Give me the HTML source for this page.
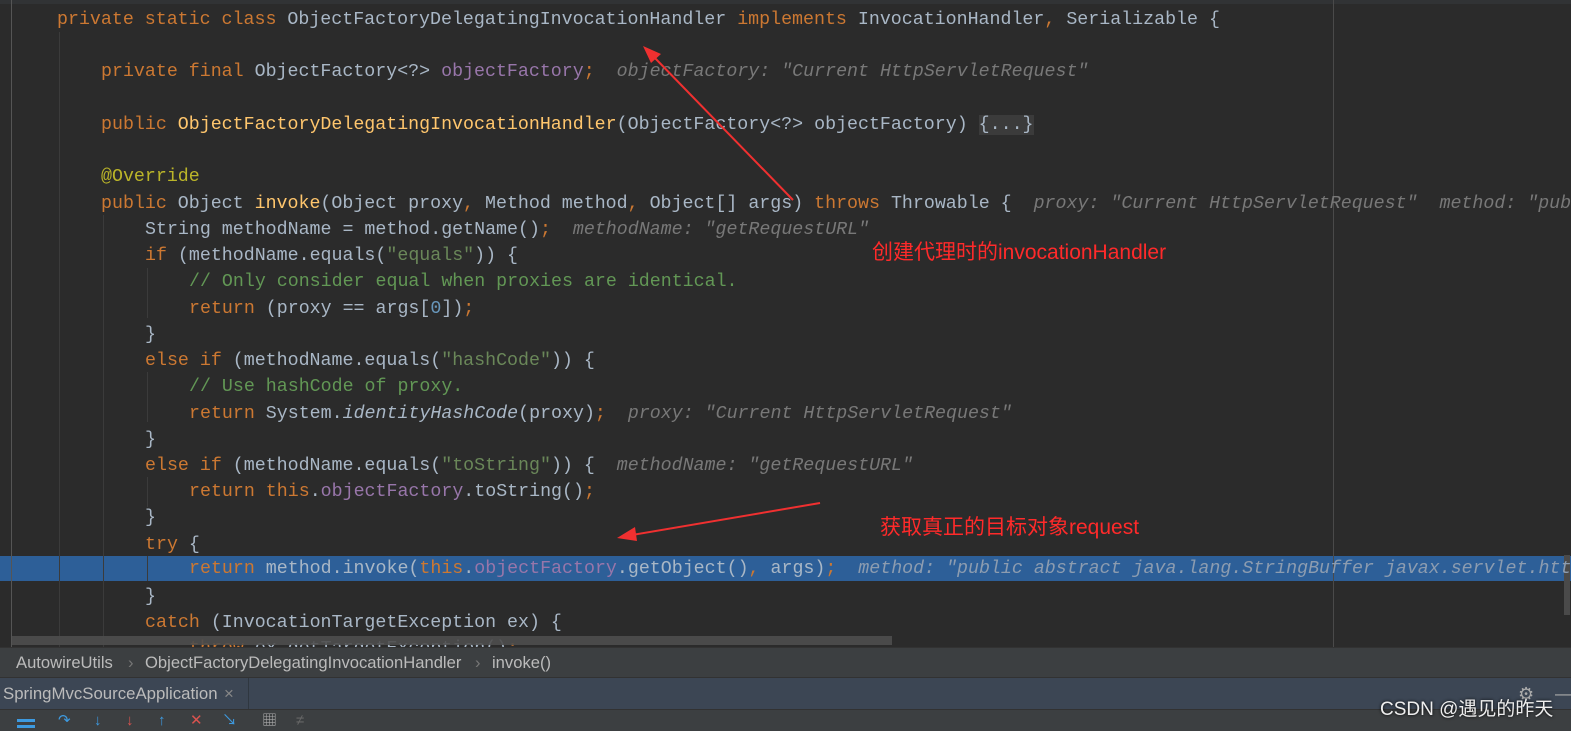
<!DOCTYPE html>
<html><head><meta charset="utf-8"><style>
body{margin:0;width:1571px;height:730px;overflow:hidden;background:#2b2b2b;position:relative;font-family:"Liberation Mono",monospace}
.code{position:absolute;left:0;top:0;width:1571px;height:647px;overflow:hidden}
.ln{position:absolute;left:57px;height:26px;line-height:26px;font-size:18.3px;white-space:pre;color:#a9b7c6;margin-top:2px}
.k{color:#cc7832}.s{color:#6a8759}.c{color:#629755}.f{color:#9876aa}.a{color:#bbb529}.m{color:#ffc66d}
.h{color:#787878;font-style:italic}.i{font-style:italic}
.sel{position:absolute;left:0;top:556px;width:1571px;height:25px;background:#2d5f98}
.guide{position:absolute;width:1px;background:#3b3b3b}
.bar{position:absolute;left:0;width:1571px}
.ui{font-family:"Liberation Sans","Noto Sans CJK SC",sans-serif}
.note{position:absolute;color:#ff2a2a;font-family:"Liberation Sans","Noto Sans CJK SC",sans-serif;font-size:21px}
</style></head><body>
<div class="code">
<div class="sel"></div>
<div style="position:absolute;left:0;top:0;width:1571px;height:4px;background:#313335"></div>
<div style="position:absolute;left:11px;top:0;width:1px;height:647px;background:#555"></div>
<div class="guide" style="left:59px;top:32px;height:615px"></div>
<div class="guide" style="left:103px;top:215px;height:432px"></div>
<div class="guide" style="left:147px;top:268px;height:50px"></div>
<div class="guide" style="left:147px;top:372px;height:50px"></div>
<div class="guide" style="left:147px;top:477px;height:30px"></div>
<div class="guide" style="left:147px;top:556px;height:25px"></div>
<div style="position:absolute;left:1333px;top:0;width:1px;height:647px;background:#4a4a4a"></div>
<div style="position:absolute;left:1564px;top:555px;width:6px;height:60px;background:#4a4a4a"></div>
<div class="ln" style="top:5px"><span class="k">private static class </span>ObjectFactoryDelegatingInvocationHandler <span class="k">implements </span>InvocationHandler<span class="k">, </span>Serializable {</div>
<div class="ln" style="top:57px;left:101px"><span class="k">private final </span>ObjectFactory&lt;?&gt; <span class="f">objectFactory</span><span class="k">;</span>  <span class="h">objectFactory: "Current HttpServletRequest"</span></div>
<div class="ln" style="top:110px;left:101px"><span class="k">public </span><span class="m">ObjectFactoryDelegatingInvocationHandler</span>(ObjectFactory&lt;?&gt; objectFactory) <span style="background:#3b3b3b;color:#a9b7c6">{...}</span></div>
<div class="ln" style="top:162px;left:101px"><span class="a">@Override</span></div>
<div class="ln" style="top:189px;left:101px"><span class="k">public </span>Object <span class="m">invoke</span>(Object proxy<span class="k">, </span>Method method<span class="k">, </span>Object[] args) <span class="k">throws </span>Throwable {  <span class="h">proxy: "Current HttpServletRequest"  method: "public</span></div>
<div class="ln" style="top:215px;left:145px">String methodName = method.getName()<span class="k">;</span>  <span class="h">methodName: "getRequestURL"</span></div>
<div class="ln" style="top:241px;left:145px"><span class="k">if </span>(methodName.equals(<span class="s">"equals"</span>)) {</div>
<div class="ln" style="top:267px;left:189px"><span class="c">// Only consider equal when proxies are identical.</span></div>
<div class="ln" style="top:294px;left:189px"><span class="k">return </span>(proxy == args[<span style="color:#6897bb">0</span>])<span class="k">;</span></div>
<div class="ln" style="top:320px;left:145px">}</div>
<div class="ln" style="top:346px;left:145px"><span class="k">else if </span>(methodName.equals(<span class="s">"hashCode"</span>)) {</div>
<div class="ln" style="top:372px;left:189px"><span class="c">// Use hashCode of proxy.</span></div>
<div class="ln" style="top:399px;left:189px"><span class="k">return </span>System.<span class="i">identityHashCode</span>(proxy)<span class="k">;</span>  <span class="h">proxy: "Current HttpServletRequest"</span></div>
<div class="ln" style="top:425px;left:145px">}</div>
<div class="ln" style="top:451px;left:145px"><span class="k">else if </span>(methodName.equals(<span class="s">"toString"</span>)) {  <span class="h">methodName: "getRequestURL"</span></div>
<div class="ln" style="top:477px;left:189px"><span class="k">return this</span>.<span class="f">objectFactory</span>.toString()<span class="k">;</span></div>
<div class="ln" style="top:503px;left:145px">}</div>
<div class="ln" style="top:530px;left:145px"><span class="k">try </span>{</div>
<div class="ln" style="top:556px;left:189px;margin-top:0"><span class="k">return </span>method.invoke(<span class="k">this</span>.<span class="f">objectFactory</span>.getObject()<span class="k">, </span>args)<span class="k">;</span>  <span class="h" style="color:#8c9cb0">method: "public abstract java.lang.StringBuffer javax.servlet.http</span></div>
<div class="ln" style="top:582px;left:145px">}</div>
<div class="ln" style="top:608px;left:145px"><span class="k">catch </span>(InvocationTargetException ex) {</div>
<div class="ln" style="top:634px;left:189px"><span class="k">throw </span>ex.getTargetException()<span class="k">;</span></div>
<div style="position:absolute;left:12px;top:636px;width:880px;height:9px;background:#4e4e4e;opacity:.9"></div>
</div>
<div class="bar ui" style="top:647px;height:30px;background:#3c3f41;border-top:1px solid #323232;color:#bbb;font-size:16.6px;line-height:30px">
<span style="position:absolute;left:16px">AutowireUtils</span><span style="position:absolute;left:128px;color:#777">›</span>
<span style="position:absolute;left:145px">ObjectFactoryDelegatingInvocationHandler</span><span style="position:absolute;left:475px;color:#777">›</span>
<span style="position:absolute;left:492px">invoke()</span></div>
<div class="bar ui" style="top:677px;height:32px;background:#3c4654;border-top:1px solid #323232;color:#bbb;font-size:16.8px;line-height:32px">
<span style="position:absolute;left:3px">SpringMvcSourceApplication</span><span style="position:absolute;left:224px;color:#888">×</span>
<div style="position:absolute;left:248px;top:0;width:1px;height:32px;background:#2f3740"></div>
<span style="position:absolute;left:1518px;top:0;color:#aaa;font-size:18px">⚙</span><span style="position:absolute;left:1555px;color:#aaa">—</span></div>
<div class="bar ui" style="top:709px;height:21px;background:#3c3f41;border-top:1px solid #323232;font-size:15px;line-height:21px">
<span style="position:absolute;left:17px;top:0;width:18px;height:3px;background:#3d9ae0;margin-top:9px"></span>
<span style="position:absolute;left:17px;top:6px;width:18px;height:3px;background:#3d9ae0;margin-top:9px"></span>
<span style="position:absolute;left:58px;color:#3d9ae0">↷</span><span style="position:absolute;left:94px;color:#3d9ae0">↓</span>
<span style="position:absolute;left:126px;color:#d9534f">↓</span><span style="position:absolute;left:158px;color:#3d9ae0">↑</span>
<span style="position:absolute;left:190px;color:#d9534f">✕</span><span style="position:absolute;left:222px;color:#3d9ae0">↘</span>
<span style="position:absolute;left:262px;color:#aaa">▦</span><span style="position:absolute;left:296px;color:#666">≠</span>
<span style="position:absolute;left:1380px;top:-11px;color:#eee;font-size:19px;text-shadow:0 0 3px #000">CSDN @遇见的昨天</span></div>
<svg style="position:absolute;left:0;top:0" width="1571" height="730">
<g stroke="#f03030" fill="#f03030" stroke-width="2">
<line x1="793" y1="200" x2="652" y2="55"/><polygon points="643,46 661,54 651,63" stroke="none"/>
<line x1="820" y1="503" x2="632" y2="535"/><polygon points="617,538 635,527 637,541" stroke="none"/>
</g></svg>
<div class="note" style="left:872px;top:236px">创建代理时的invocationHandler</div>
<div class="note" style="left:880px;top:511px">获取真正的目标对象request</div>
</body></html>
